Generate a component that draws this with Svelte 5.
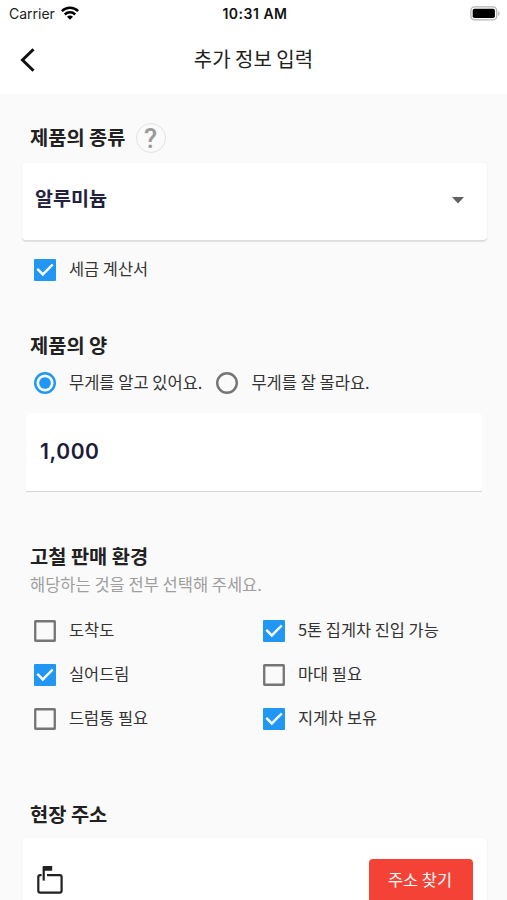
<script lang="ts">
  let taxInvoice = $state(true);
  let knowsWeight = $state(true);
  let weight = $state("1,000");

  let options = $state([
    { label: "도착도", checked: false },
    { label: "5톤 집게차 진입 가능", checked: true },
    { label: "실어드림", checked: true },
    { label: "마대 필요", checked: false },
    { label: "드럼통 필요", checked: false },
    { label: "지게차 보유", checked: true },
  ]);
</script>

{#snippet checkbox(checked: boolean)}
  <svg class="control" viewBox="0 0 18 18">
    {#if checked}
      <rect width="18" height="18" rx="0.8" fill="#2196f3" />
      <path d="M2.7 8.1 7.2 12.6 15.3 4.5" fill="none" stroke="#fff" stroke-width="2" />
    {:else}
      <rect x="1" y="1" width="16" height="16" rx="0.3" fill="none" stroke="#757575" stroke-width="1.9" />
    {/if}
  </svg>
{/snippet}

{#snippet radio(checked: boolean)}
  <svg class="control" viewBox="0 0 18 18">
    <circle cx="9" cy="9" r="8" fill="none" stroke={checked ? "#2196f3" : "#757575"} stroke-width="2" />
    {#if checked}
      <circle cx="9" cy="9" r="4.8" fill="#2196f3" />
    {/if}
  </svg>
{/snippet}

<div class="screen">
  <div class="status">
    <div class="carrier">
      <span>Carrier</span>
      <svg width="18" height="14" viewBox="0 0 18 14" fill="none" stroke="#000" stroke-width="2.5">
        <path d="M0.9 5.1a11.6 11.6 0 0 1 16.2 0" />
        <path d="M3.8 8.5a7.4 7.4 0 0 1 10.4 0" />
        <path d="M9 13.8 6 10.8a4.2 4.2 0 0 1 6 0z" fill="#000" stroke="none" />
      </svg>
    </div>
    <span class="time">10:31 AM</span>
    <svg class="battery" width="31" height="15" viewBox="0 0 31 15">
      <rect x="0.9" y="0.9" width="25.8" height="13" rx="3.6" fill="#fff" stroke="#b5b5b5" stroke-width="1.3" />
      <rect x="2.7" y="2.7" width="22.2" height="9.4" rx="1.8" fill="#000" />
      <path d="M28.2 5v4.8c1.9-.7 1.9-4.1 0-4.8z" fill="#b5b5b5" />
    </svg>
  </div>

  <header>
    <button class="back" aria-label="뒤로">
      <svg width="16" height="26" viewBox="0 0 16 26">
        <path d="M13.5 2.2 2.5 13l11 10.8" fill="none" stroke="#111" stroke-width="3" />
      </svg>
    </button>
    <h1>추가 정보 입력</h1>
  </header>

  <main>
    <section class="kind">
      <div class="heading">
        <h2>제품의 종류</h2>
        <span class="help">?</span>
      </div>
      <div class="card select">
        <span>알루미늄</span>
        <svg width="12" height="7" viewBox="0 0 12 7"><path d="M0 0h12L6 6.4z" fill="#616161" /></svg>
      </div>
      <button class="choice" onclick={() => (taxInvoice = !taxInvoice)}>
        {@render checkbox(taxInvoice)}
        <span>세금 계산서</span>
      </button>
    </section>

    <section class="amount">
      <h2>제품의 양</h2>
      <div class="radios">
        <button class="choice" onclick={() => (knowsWeight = true)}>
          {@render radio(knowsWeight)}
          <span>무게를 알고 있어요.</span>
        </button>
        <button class="choice" onclick={() => (knowsWeight = false)}>
          {@render radio(!knowsWeight)}
          <span>무게를 잘 몰라요.</span>
        </button>
      </div>
      <input bind:value={weight} aria-label="무게" />
    </section>

    <section class="environment">
      <h2>고철 판매 환경</h2>
      <p>해당하는 것을 전부 선택해 주세요.</p>
      <div class="options">
        {#each options as option}
          <button class="choice" onclick={() => (option.checked = !option.checked)}>
            {@render checkbox(option.checked)}
            <span>{option.label}</span>
          </button>
        {/each}
      </div>
    </section>

    <section class="address">
      <h2>현장 주소</h2>
      <div class="card search">
        <svg width="26" height="28" viewBox="0 0 26 28" fill="none" stroke="#212121" stroke-width="2.2">
          <path d="M4.6 9.1H3.2c-1.1 0-1.9.8-1.9 1.9v13.8c0 1.1.8 1.9 1.9 1.9h19.5c1.1 0 1.9-.8 1.9-1.9V11c0-1.1-.8-1.9-1.9-1.9H10" />
          <path d="M6.7 14.6V1" />
          <path d="M5.6 0h9.6v4.8H7z" fill="#212121" stroke="none" />
        </svg>
        <button class="find">주소 찾기</button>
      </div>
    </section>
  </main>
</div>

<style>
  :global(body) {
    margin: 0;
  }

  .screen {
    height: 900px;
    overflow: hidden;
    background: #fafafa;
    color: #212121;
    font-family: "Noto Sans CJK KR", sans-serif;
  }

  button {
    padding: 0;
    border: 0;
    background: none;
    font: inherit;
    color: inherit;
    cursor: pointer;
  }

  .status {
    display: grid;
    grid-template-columns: 1fr auto 1fr;
    align-items: center;
    height: 28px;
    padding: 0 6px 0 9px;
    background: #fff;
    font-family: Inter, sans-serif;
    font-size: 14px;
    color: #222;
  }

  .carrier {
    display: flex;
    align-items: center;
    gap: 6px;
    margin-top: -2px;
  }

  .carrier svg { margin-top: -1px; }

  .time {
    margin-top: -2px;
    font-weight: 600;
    letter-spacing: 0.5px;
    color: #111;
  }

  .battery {
    justify-self: end;
    margin-top: -2px;
  }

  header {
    display: grid;
    grid-template-columns: 60px 1fr 60px;
    align-items: center;
    height: 66px;
    background: #fff;
  }

  .back {
    display: flex;
    padding-left: 20px;
    margin-top: -2px;
  }

  h1 {
    margin: 0 0 4px;
    font-size: 20px;
    font-weight: 400;
    line-height: 30px;
    text-align: center;
  }

  main { padding: 22px 20px 0 22px; }

  h2 {
    margin: -1px 0 1px 8px;
    font-size: 19.8px;
    font-weight: 700;
    line-height: 30px;
    white-space: nowrap;
  }

  .heading {
    display: flex;
    align-items: center;
    gap: 10px;
    height: 44px;
    margin-bottom: 3px;
  }

  .help {
    box-sizing: border-box;
    width: 30px;
    height: 30px;
    border: 1.5px solid #e2e2e2;
    border-radius: 50%;
    font: 500 27px/30px Roboto, sans-serif;
    text-align: center;
    color: #9a9a9a;
  }

  .card {
    display: flex;
    justify-content: space-between;
    box-sizing: border-box;
    background: #fff;
    border-radius: 4px;
    box-shadow: 0 1.5px 1px rgba(0, 0, 0, 0.1), 0 0 2px rgba(0, 0, 0, 0.06);
  }

  .select {
    align-items: center;
    height: 77px;
    padding: 0 23px 8px 13px;
    font-size: 19.6px;
    font-weight: 700;
    color: #22223f;
  }

  .select svg { margin-top: 6px; }

  .choice {
    display: flex;
    align-items: center;
    gap: 13px;
    height: 44px;
    padding-left: 12px;
    font-size: 16.4px;
    line-height: 24px;
    color: #333;
    white-space: nowrap;
  }

  .choice span { margin-top: -5px; }

  .control {
    flex: none;
    width: 22px;
    height: 22px;
  }

  .kind .choice { margin-top: 8px; }

  .amount { margin-top: 39px; }

  .radios {
    display: flex;
    gap: 2px;
    margin-top: 1px;
  }

  .radios .choice { font-size: 16.5px; }

  .radios .choice span { margin-top: -3px; }

  input {
    display: block;
    box-sizing: border-box;
    width: 456px;
    height: 78px;
    margin: 8px 0 0 4px;
    padding: 0 14px 2px;
    border: 0;
    border-radius: 4px 4px 0 0;
    background: #fff;
    box-shadow: 0 1px 0 #d4d4d4;
    font: 600 21px Inter, sans-serif;
    letter-spacing: 0.6px;
    color: #1c1c38;
  }

  .environment { margin-top: 51px; }

  p {
    margin: 0 0 0 8px;
    font-size: 16.5px;
    line-height: 24px;
    color: #9e9e9e;
  }

  .options {
    display: grid;
    grid-template-columns: 229px 1fr;
    margin-top: 13px;
  }

  .address { margin-top: 59px; }

  .search {
    align-items: flex-start;
    height: 100px;
    margin-top: 9px;
    padding: 21px 14px 0 15px;
  }

  .search svg { margin-top: 7px; }

  .find {
    width: 104px;
    height: 46px;
    padding: 0 2px 6px 0;
    border-radius: 4px;
    background: #f44336;
    font-size: 16.4px;
    color: #fff;
  }
</style>
